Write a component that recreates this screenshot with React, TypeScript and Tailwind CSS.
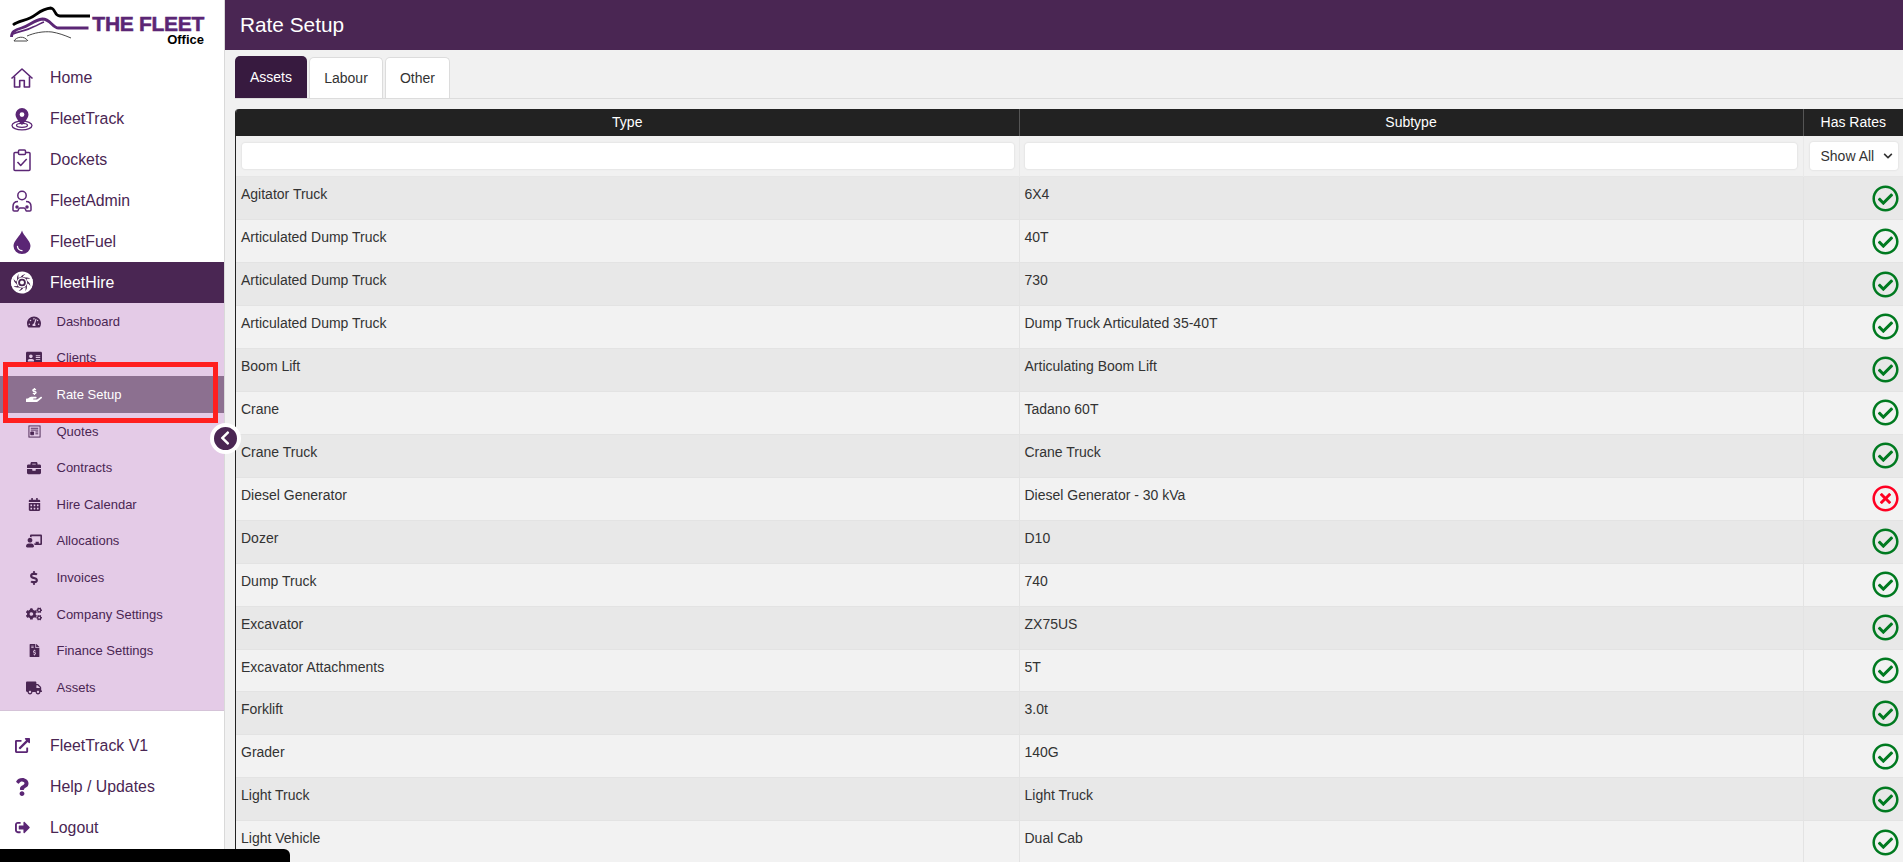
import type { ReactNode } from "react";
import {
  FaAddressCard,
  FaBriefcase,
  FaCalendarAlt,
  FaChalkboardTeacher,
  FaChevronDown,
  FaChevronLeft,
  FaCogs,
  FaDollarSign,
  FaExternalLinkAlt,
  FaFileInvoiceDollar,
  FaHandHoldingUsd,
  FaQuestion,
  FaRegCheckCircle,
  FaRegTimesCircle,
  FaSignOutAlt,
  FaTachometerAlt,
  FaTruck,
} from "react-icons/fa";

const font = "font-['Liberation_Sans',Arial,sans-serif]";

function HomeIcon() {
  return (
    <svg viewBox="0 0 24 24" className="h-[24px] w-[24px]" fill="none" stroke="currentColor" strokeWidth="1.600" strokeLinejoin="round">
      <path d="M1.500 12.500 12 3l10.500 9.500" />
      <path d="M4.500 10.500V21h5.200v-6.500h4.600V21h5.200V10.500" />
    </svg>
  );
}

function TrackIcon() {
  return (
    <svg viewBox="0 0 24 24" className="h-[24px] w-[24px]" fill="currentColor">
      <path fillRule="evenodd" d="M12 1a6.500 6.500 0 0 0-6.500 6.500C5.500 12 12 18 12 18s6.500-6 6.500-10.500A6.500 6.500 0 0 0 12 1Zm0 4.200a2.400 2.400 0 1 1 0 4.800 2.400 2.400 0 0 1 0-4.800Z" />
      <ellipse cx="12" cy="18.500" rx="10" ry="4.300" fill="none" stroke="currentColor" strokeWidth="1.300" />
      <ellipse cx="12" cy="18.300" rx="5.500" ry="2" fill="none" stroke="currentColor" strokeWidth="1.200" />
    </svg>
  );
}

function DocketIcon() {
  return (
    <svg viewBox="0 0 24 24" className="h-[24px] w-[24px]" fill="none" stroke="currentColor" strokeWidth="1.500" strokeLinejoin="round">
      <rect x="4" y="4.500" width="16" height="18" rx="1" />
      <rect x="8.500" y="2" width="7" height="4.500" rx="1" fill="#fff" />
      <path d="m7.500 14 3.200 3.500 6-6.500" />
    </svg>
  );
}

function AdminIcon() {
  return (
    <svg viewBox="0 0 24 24" className="h-[24px] w-[24px]" fill="none" stroke="currentColor" strokeWidth="1.500">
      <circle cx="12" cy="6.500" r="4.200" />
      <path d="M8 12.500c-3 0-5 2-5 5v3.500c0 .8.600 1 1.200 1h3.300c.8 0 .8-3 2.500-3h4c1.700 0 1.700 3 2.500 3h3.300c.6 0 1.200-.2 1.200-1v-3.500c0-3-2-5-5-5" />
      <circle cx="7" cy="18" r="1" fill="currentColor" />
      <circle cx="17" cy="18" r="1" fill="currentColor" />
    </svg>
  );
}

function FuelIcon() {
  return (
    <svg viewBox="0 0 24 24" className="h-[24px] w-[24px]">
      <path fill="currentColor" d="M12 .500C10.500 6 3.500 10.500 3.500 16a8.500 8 0 0 0 17 0C20.500 10.500 13.500 6 12 .500Z" />
      <path fill="none" stroke="#fff" strokeWidth="1.300" strokeLinecap="round" d="M7.500 16.500c.3 2.400 2 3.900 4.500 4.100" />
    </svg>
  );
}

function TurbineIcon() {
  const blades = [0, 45, 90, 135, 180, 225, 270, 315];
  return (
    <svg viewBox="0 0 24 24" className="h-[25px] w-[25px]" fill="#fff">
      {blades.map((deg) => (
        <path key={deg} transform={`rotate(${deg} 12 12)`} d="M8.500 1.500c4.500-1.300 8-.3 10.500 2.500-3.500-.8-6-.3-7.500 1.500-.8 1-1.500 1.500-3 2-.4-2 .3-4 0-6Z" />
      ))}
      <circle cx="12" cy="12" r="4.500" fill="none" stroke="#fff" strokeWidth="1.300" />
      <circle cx="12" cy="12" r="2" />
    </svg>
  );
}

function QuoteIcon() {
  return (
    <svg viewBox="0 0 14 14" className="h-[13px] w-[13px]" fill="none" stroke="currentColor" strokeWidth="1">
      <rect x="1" y="1" width="12" height="12" />
      <path d="M3 3.500h8M3 5.500h8" />
      <path d="M3 7.500h3v3H3zM8 7.500h3M8 9.500h3" fill="currentColor" />
    </svg>
  );
}

function Logo() {
  return (
    <div className="flex h-[57px] shrink-0">
      <svg viewBox="0 0 92 45" className="h-[45px] w-[92px] shrink-0" fill="none">
        <path d="M13 25c5-4 11-4 17-7 7-3 10-9 21-10 5 1 3 8 9 8h30" stroke="#000" strokeWidth="2.800" />
        <path d="M11.500 37c0-5 3-7 10-9 8-2 12-8 21-9 8 0 10 9 16 9h30" stroke="#5b2675" strokeWidth="2.800" />
        <path d="M13 34c6-3 13-3 20-7 5-2 8-4 11-5" stroke="#5b2675" strokeWidth="1.600" />
        <path d="M27 36c7-3 16-5 25-4 6 1 12 3 19 6" stroke="#333" strokeWidth="0.900" />
        <path d="M14 41c2-4 10-6 14 0M14 41h13" stroke="#333" strokeWidth="0.900" />
      </svg>
      <div className="flex w-[112px] flex-col items-end pt-[13px]">
        <span className="text-[21px] leading-[21px] font-bold tracking-[-0.300px] whitespace-nowrap text-[#5b2675] [-webkit-text-stroke:0.500px_#5b2675]">THE FLEET</span>
        <span className="mt-[-1px] text-[13px] leading-[14px] font-bold text-black">Office</span>
      </div>
    </div>
  );
}

function MainLink({ icon, label, active }: { icon: ReactNode; label: string; active?: boolean }) {
  return (
    <div className={`flex h-[41.050px] items-center text-[15.850px] ${active ? "bg-[#4a2653] text-white" : "text-[#4a2653]"}`}>
      <span className={`ml-[10px] flex w-[24px] items-center justify-center ${active ? "" : "text-[#5b2675]"}`}>{icon}</span>
      <span className="ml-[16px]">{label}</span>
    </div>
  );
}

function SubLink({ icon, label, active }: { icon: ReactNode; label: string; active?: boolean }) {
  return (
    <div className={`flex h-[36.600px] items-center text-[13px] ${active ? "bg-[#8c7090] text-white" : "text-[#4a2653]"}`}>
      <span className="ml-[24px] flex w-[20px] items-center justify-center text-[14px]">{icon}</span>
      <span className="ml-[12.500px]">{label}</span>
    </div>
  );
}

function Sidebar() {
  return (
    <aside className="flex w-[225px] shrink-0 flex-col border-r border-[#d9d9d9] bg-white">
      <Logo />
      <MainLink icon={<HomeIcon />} label="Home" />
      <MainLink icon={<TrackIcon />} label="FleetTrack" />
      <MainLink icon={<DocketIcon />} label="Dockets" />
      <MainLink icon={<AdminIcon />} label="FleetAdmin" />
      <MainLink icon={<FuelIcon />} label="FleetFuel" />
      <MainLink icon={<TurbineIcon />} label="FleetHire" active />
      <div className="border-b border-[#d5c3d8] bg-[#e4cbe7] pb-[4.500px]">
        <SubLink icon={<FaTachometerAlt />} label="Dashboard" />
        <SubLink icon={<FaAddressCard className="text-[16px]" />} label="Clients" />
        <SubLink icon={<FaHandHoldingUsd className="text-[16px]" />} label="Rate Setup" active />
        <SubLink icon={<QuoteIcon />} label="Quotes" />
        <SubLink icon={<FaBriefcase />} label="Contracts" />
        <SubLink icon={<FaCalendarAlt className="text-[13px]" />} label="Hire Calendar" />
        <SubLink icon={<FaChalkboardTeacher className="text-[16px]" />} label="Allocations" />
        <SubLink icon={<FaDollarSign className="text-[14px]" />} label="Invoices" />
        <SubLink icon={<FaCogs className="text-[16px]" />} label="Company Settings" />
        <SubLink icon={<FaFileInvoiceDollar className="text-[13px]" />} label="Finance Settings" />
        <SubLink icon={<FaTruck className="text-[16px]" />} label="Assets" />
      </div>
      <div className="pt-[13.800px]">
        <MainLink icon={<FaExternalLinkAlt className="text-[15px]" />} label="FleetTrack V1" />
        <MainLink icon={<FaQuestion className="text-[18px]" />} label="Help / Updates" />
        <MainLink icon={<FaSignOutAlt className="text-[15px]" />} label="Logout" />
      </div>
    </aside>
  );
}

const rows: [string, string, boolean][] = [
  ["Agitator Truck", "6X4", true],
  ["Articulated Dump Truck", "40T", true],
  ["Articulated Dump Truck", "730", true],
  ["Articulated Dump Truck", "Dump Truck Articulated 35-40T", true],
  ["Boom Lift", "Articulating Boom Lift", true],
  ["Crane", "Tadano 60T", true],
  ["Crane Truck", "Crane Truck", true],
  ["Diesel Generator", "Diesel Generator - 30 kVa", false],
  ["Dozer", "D10", true],
  ["Dump Truck", "740", true],
  ["Excavator", "ZX75US", true],
  ["Excavator Attachments", "5T", true],
  ["Forklift", "3.0t", true],
  ["Grader", "140G", true],
  ["Light Truck", "Light Truck", true],
  ["Light Vehicle", "Dual Cab", true],
];

function RateTable() {
  return (
    <div className="mt-[10px] overflow-hidden rounded-tl-[4px] border-l border-[#222]">
      <table className="w-full table-fixed text-[14px] text-[#333]">
        <colgroup>
          <col className="w-[783px]" />
          <col className="w-[784px]" />
          <col className="w-[100px]" />
        </colgroup>
        <thead>
          <tr className="h-[27px] bg-[#222] text-white">
            <th className="border-r border-[#555] font-normal">Type</th>
            <th className="border-r border-[#555] font-normal">Subtype</th>
            <th className="font-normal">Has Rates</th>
          </tr>
          <tr className="h-[40.700px] border-b border-[#e6e6e6] bg-[#f1f1f1]">
            <td className="border-r border-[#e9e9e9] pr-[5px] pl-[6px]">
              <input className="block h-[26px] w-full rounded-[3px] bg-white shadow-[0_0_2px_#d0d0d0]" />
            </td>
            <td className="border-r border-[#e9e9e9] pr-[6px] pl-[5px]">
              <input className="block h-[26px] w-full rounded-[3px] bg-white shadow-[0_0_2px_#d0d0d0]" />
            </td>
            <td className="px-[6px]">
              <div className="relative">
                <select defaultValue="all" className="block h-[28px] w-[88px] appearance-none rounded-[3px] bg-white pl-[11px] text-[14px] text-[#333] shadow-[0_0_2px_#d0d0d0]">
                  <option value="all">Show All</option>
                  <option value="yes">Yes</option>
                  <option value="no">No</option>
                </select>
                <FaChevronDown className="pointer-events-none absolute top-[9px] left-[73px] text-[10px] text-[#333]" />
              </div>
            </td>
          </tr>
        </thead>
        <tbody>
          {rows.map(([type, subtype, hasRates], i) => (
            <tr key={i} className={`h-[42.950px] border-b border-[#e3e3e3] ${i % 2 === 0 ? "bg-[#e8e8e8]" : "bg-[#f2f2f2]"}`}>
              <td className="border-r border-[#e3e3e3] px-[5px] pt-[9px] align-top leading-[16px]">{type}</td>
              <td className="border-r border-[#e3e3e3] px-[5px] pt-[9px] align-top leading-[16px]">{subtype}</td>
              <td className="pr-[4px] align-middle">
                <div className="flex justify-end">
                  {hasRates ? (
                    <FaRegCheckCircle className="text-[27px] text-[#007a20]" />
                  ) : (
                    <FaRegTimesCircle className="text-[27px] text-[#ff0022]" />
                  )}
                </div>
              </td>
            </tr>
          ))}
        </tbody>
      </table>
    </div>
  );
}

export default function App() {
  return (
    <div className={`relative flex h-screen w-full overflow-hidden bg-[#f1f1f1] ${font}`}>
      <Sidebar />
      <main className="min-w-0 flex-1">
        <header className="flex h-[50px] items-center bg-[#4a2653] pl-[15px] text-[20.800px] text-white">Rate Setup</header>
        <div className="pt-[7px] pl-[10px]">
          <div className="flex h-[42px] items-end gap-[2px] border-b border-[#dcdcdc] text-[14px]">
            <div className="flex h-[42px] w-[72px] items-center justify-center rounded-t-[5px] bg-[#371a3f] pt-[1px] text-white">Assets</div>
            <div className="flex h-[41.500px] w-[74px] items-center justify-center rounded-t-[5px] border border-b-0 border-[#dcdcdc] bg-white pt-[1px] text-[#333]">Labour</div>
            <div className="flex h-[41.500px] w-[65px] items-center justify-center rounded-t-[5px] border border-b-0 border-[#dcdcdc] bg-white pt-[1px] text-[#333]">Other</div>
          </div>
          <RateTable />
        </div>
      </main>
      {/* annotation and overlays from the screenshot */}
      <div className="pointer-events-none absolute top-[362px] left-[3px] h-[61px] w-[215px] border-[5px] border-[#ff1f1f]" />
      <button type="button" className="absolute top-[422.500px] left-[209.500px] flex h-[31px] w-[31px] items-center justify-center rounded-full border-[4px] border-white bg-[#4a2653] text-[16px] text-white">
        <FaChevronLeft />
      </button>
      <div className="absolute bottom-0 left-0 h-[13px] w-[290px] rounded-tr-[6px] bg-black" />
    </div>
  );
}
